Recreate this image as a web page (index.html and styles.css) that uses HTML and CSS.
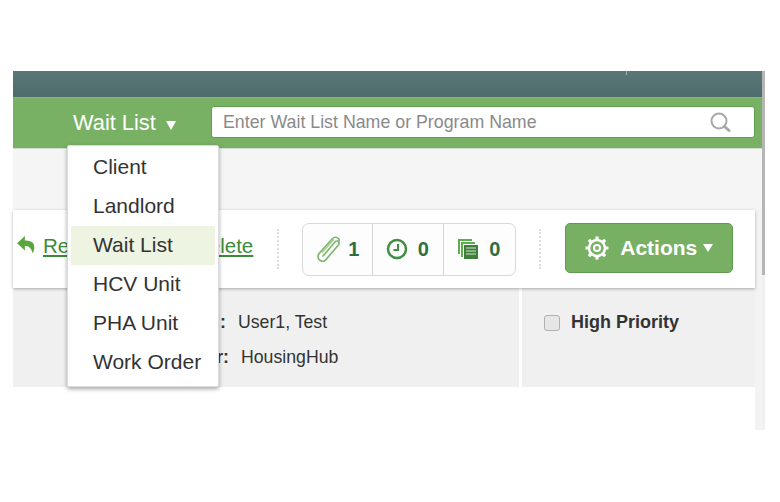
FILE: index.html
```html
<!DOCTYPE html>
<html lang="en">
	<head>
		<meta charset="utf-8">
		<title>Wait List</title>
		<link rel="stylesheet" href="styles.css">
	</head>
	<body>
		<div class="frame">
			<div class="main">
				<div class="topbar"><span class="speck"></span></div>
				<div class="searchbar">
					<a class="scope">Wait List <span class="caret"></span></a>
					<div class="search">
						<span class="search-text">Enter Wait List Name or Program Name</span>
						<svg class="search-icon" width="22" height="22" viewBox="0 0 22 22"><circle cx="10" cy="10" r="7.5" fill="none" stroke="#a9a9a9" stroke-width="2"/><path d="M15.5 15.5l4.5 4" stroke="#a9a9a9" stroke-width="3" stroke-linecap="round"/></svg>
					</div>
				</div>
				<ul class="menu">
					<li>Client</li>
					<li>Landlord</li>
					<li class="active">Wait List</li>
					<li>HCV Unit</li>
					<li>PHA Unit</li>
					<li>Work Order</li>
				</ul>
				<div class="strip"></div>
				<div class="toolbar">
					<svg class="reply" width="20" height="20" viewBox="0 0 18 18"><path d="M8 1L1 7.500l7 6.500V10c3.500 0 5.500 1.500 7 6.500 1.500-2.500 2-5.500 1-8C15 6 12 5 8 5z" fill="#5aa63f"/></svg>
					<a class="link link-first">Refer</a>
					<a class="link link-last">Delete</a>
					<span class="dots"></span>
					<div class="counts">
						<div class="count count-clip">
							<svg width="26" height="26" viewBox="4 1 21 24"><path d="M9 19.500L20 6.500c2.500-2.500 5 .5 3 3L11.500 23c-3.500 3.500-9.500-1-6-6L17.500 3.500c3-3 8 0 6 3" fill="none" stroke="#7db56a" stroke-width="1.500" stroke-linecap="round"/><path d="M8 16.500L19 4" fill="none" stroke="#a5cf95" stroke-width="1.500"/></svg>
							<b>1</b>
						</div>
						<div class="count count-wide">
							<svg width="22" height="22" viewBox="0 0 22 22"><circle cx="11" cy="11" r="9" fill="none" stroke="#3f8f42" stroke-width="2.500"/><path d="M12 6v6H7.500" fill="none" stroke="#3f8f42" stroke-width="2"/></svg>
							<b>0</b>
						</div>
						<div class="count count-wide count-last">
							<svg width="22" height="22" viewBox="0 0 22 22"><path d="M1 1h14v2H3v13H1zM4 4h14v2H6v13H4z" fill="#5cae4c"/><path d="M7 7h14v14H7z" fill="#3f7f3c"/><path d="M9 10h10M9 13h10M9 16h10" stroke="#cfe5c5" stroke-width="1.200"/></svg>
							<b>0</b>
						</div>
					</div>
					<span class="dots"></span>
					<a class="actions">
						<svg width="26" height="26" viewBox="0 0 26 26"><g stroke="#fff" stroke-width="3.200"><path d="M13 1.500v23M1.500 13h23M4.900 4.900l16.200 16.200M21.100 4.900L4.900 21.100"/></g><circle cx="13" cy="13" r="8" fill="#7ab267" stroke="#fff" stroke-width="2.500"/><circle cx="13" cy="13" r="3" fill="none" stroke="#fff" stroke-width="2"/></svg>
						<span>Actions</span>
						<span class="caret caret-small"></span>
					</a>
				</div>
				<div class="details">
					<div class="detail-left">
						<div class="meta meta-one"><b>:</b><span>User1, Test</span></div>
						<div class="meta meta-two"><b>r:</b><span>HousingHub</span></div>
					</div>
					<div class="detail-right">
						<label class="priority"><span class="check"></span>High Priority</label>
					</div>
				</div>
			</div>
			<div class="scroll"><div class="thumb"></div></div>
		</div>
	</body>
</html>
```

FILE: styles.css
```css
html, body { margin: 0; padding: 0; height: 502px; overflow: hidden; background: #fff; font-family: "Liberation Sans", Arial, sans-serif; }
a { cursor: pointer; }
.frame { display: flex; width: 752px; height: 359px; margin: 71px 0 0 13px; }
.main { position: relative; width: 749px; background: linear-gradient(to right, #fff 742px, #f3f3f3 742px); }
.topbar { position: relative; height: 26px; background: linear-gradient(#5a7676, #4f6c6d); border-bottom: 1px solid #8fa8a0; }
.speck { position: absolute; left: 613px; top: 0; width: 1px; height: 4px; background: #9fb0b0; }
.searchbar { display: flex; align-items: flex-start; height: 51px; padding-left: 60px; box-sizing: border-box; background: #78b163; border-bottom: 1px solid #cfdfcc; }
.scope { width: 138px; padding-top: 12px; font-size: 21.800px; color: #fff; white-space: nowrap; }
.caret { display: inline-block; width: 0; height: 0; margin-left: 4px; border-top: 9px solid #fff; border-left: 5px solid transparent; border-right: 5px solid transparent; }
.search { display: flex; align-items: center; justify-content: space-between; width: 544px; height: 32px; margin-top: 8px; padding: 0 23px 0 11px; box-sizing: border-box; background: #fff; border: 1px solid #5f9f4c; border-radius: 3px; }
.search-text { font-size: 17.800px; color: #8a8a8a; }
.search-icon { margin-top: -1px; }
.menu { position: absolute; z-index: 5; left: 54px; top: 74px; width: 152px; height: 242px; margin: 0; padding: 2px 3px 0; box-sizing: border-box; list-style: none; background: #fff; border: 1px solid #dcdcdc; border-radius: 2px; box-shadow: 0 2px 4px rgba(0, 0, 0, .35); }
.menu li { height: 39px; padding-left: 22px; font-size: 21px; line-height: 38px; color: #333; white-space: nowrap; }
.menu .active { background: #eef4e2; }
.strip { height: 61px; background: #f5f5f5; }
.toolbar { position: relative; display: flex; align-items: center; width: 742px; height: 78px; padding-left: 3px; box-sizing: border-box; background: #fff; box-shadow: 0 1px 3px rgba(0, 0, 0, .3); }
.reply { margin-right: 7px; margin-top: -8px; }
.link { margin-top: -6px; font-size: 20.500px; color: #3c8a3c; text-decoration: underline; }
.link-first { width: 151px; }
.link-last { margin-right: 24px; }
.dots { width: 0; height: 40px; border-left: 2px dotted #dcdcdc; }
.counts { display: flex; height: 53px; margin: 0 23px; box-sizing: border-box; background: #fdfdfd; border: 1px solid #d9d9d9; border-radius: 7px; }
.count { display: flex; align-items: center; justify-content: center; gap: 6px; width: 71px; border-left: 1px solid #d4d4d4; }
.count:first-child { border-left: 0; }
.count-clip { width: 69px; }
.count-wide { gap: 10px; box-sizing: border-box; padding-right: 2px; }
.count-last { width: 72px; }
.count b { font-size: 20px; color: #2f6f3f; }
.actions { display: flex; align-items: center; gap: 10px; width: 168px; height: 50px; margin-left: 24px; margin-bottom: 2px; padding-left: 18px; box-sizing: border-box; background: #78b063; border: 1px solid #5f9a4f; border-radius: 5px; font-size: 21px; font-weight: bold; color: #fff; }
.caret-small { margin-left: -4px; border-top-width: 8px; border-left-width: 5px; border-right-width: 5px; }
.details { display: flex; width: 742px; height: 99px; }
.detail-left { width: 506px; height: 99px; padding-top: 24px; box-sizing: border-box; background: #f0f0f0; }
.detail-right { width: 233px; margin-left: 3px; height: 99px; padding: 24px 0 0 22px; box-sizing: border-box; background: #f0f0f0; }
.meta { display: flex; height: 35px; font-size: 17.700px; color: #333; white-space: nowrap; }
.meta b { margin-right: 12px; text-align: right; }
.meta-one b { width: 213px; }
.meta-two b { width: 216px; }
.priority { display: flex; align-items: center; gap: 11px; font-size: 18px; font-weight: bold; color: #333; }
.check { width: 14px; height: 14px; background: #e6e6e6; border: 1px solid #b0b0b0; border-radius: 3px; }
.scroll { width: 3px; background: #f1f1f1; }
.thumb { height: 204px; background: #b5b5b5; }
```
